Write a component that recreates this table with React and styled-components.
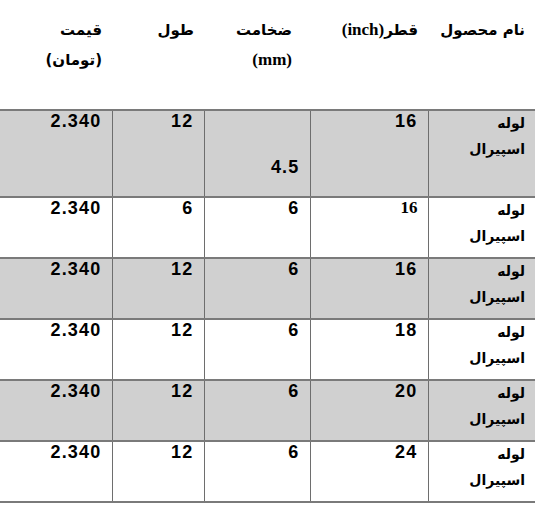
import React from 'react'
import styled, { createGlobalStyle } from 'styled-components'

const GlobalStyle = createGlobalStyle`
  html, body {
    margin: 0;
    padding: 0;
    background: #fff;
  }
`

const Table = styled.table`
  width: 535px;
  border-collapse: collapse;
  table-layout: fixed;
  direction: rtl;
  color: #000;
  font-family: "Liberation Sans", "DejaVu Sans", sans-serif;
  font-weight: 700;
`

const HeadCell = styled.th`
  height: 94px;
  padding: 15px ${props => props.pad || 10}px 0 0;
  vertical-align: top;
  text-align: right;
  font-family: "Liberation Serif", "DejaVu Sans", serif;
  font-size: 17px;
  font-weight: 700;
  line-height: 29px;
  white-space: nowrap;
`

const Fa = styled.span`
  font-family: "DejaVu Sans", sans-serif;
  font-size: 15px;
`

const Row = styled.tr`
  height: ${props => props.tall ? 87 : 61}px;
  background: ${props => props.shaded ? '#d0d0d0' : '#fff'};
  border-top: 2px solid #7a7a7a;
  &:last-child {
    border-bottom: 2px solid #7a7a7a;
  }
`

const Cell = styled.td`
  padding: 1px 10px 0 0;
  vertical-align: ${props => props.bottom ? 'bottom' : 'top'};
  padding-bottom: ${props => props.bottom ? 19 : 0}px;
  text-align: right;
  border-left: 1px solid #6e6e6e;
  line-height: 18px;
  &:last-child {
    border-left: none;
  }
`

const Num = styled.span`
  font-family: ${props => props.serif ? '"Liberation Serif", serif' : '"Liberation Sans", sans-serif'};
  font-size: ${props => props.serif ? 17 : 18}px;
  letter-spacing: ${props => props.serif ? 0 : 1.2}px;
`

const NameBlock = styled.div`
  margin-top: -2px;
`

const Name = styled.span`
  display: block;
  font-family: "DejaVu Sans", sans-serif;
  font-size: 14px;
  font-weight: 700;
  line-height: 26px;
`

const rows = [
  { dia: '16', thick: '4.5', len: '12', price: '2.340', tall: true, shaded: true },
  { dia: '16', thick: '6', len: '6', price: '2.340', serifDia: true },
  { dia: '16', thick: '6', len: '12', price: '2.340', shaded: true },
  { dia: '18', thick: '6', len: '12', price: '2.340' },
  { dia: '20', thick: '6', len: '12', price: '2.340', shaded: true },
  { dia: '24', thick: '6', len: '12', price: '2.340' },
]

export default function App() {
  return (
    <>
      <GlobalStyle />
      <Table>
        <colgroup>
          <col style={{ width: 107 }} />
          <col style={{ width: 118 }} />
          <col style={{ width: 106 }} />
          <col style={{ width: 92 }} />
          <col style={{ width: 112 }} />
        </colgroup>
        <thead>
          <tr>
            <HeadCell><Fa>نام محصول</Fa></HeadCell>
            <HeadCell><Fa>قطر</Fa>(inch)</HeadCell>
            <HeadCell pad={18}><Fa>ضخامت</Fa><br />(mm)</HeadCell>
            <HeadCell><Fa>طول</Fa></HeadCell>
            <HeadCell><Fa>قیمت</Fa><br /><Fa>(تومان)</Fa></HeadCell>
          </tr>
        </thead>
        <tbody>
          {rows.map((r, i) => (
            <Row key={i} tall={r.tall} shaded={r.shaded}>
              <Cell>
                <NameBlock>
                  <Name>لوله</Name>
                  <Name>اسپیرال</Name>
                </NameBlock>
              </Cell>
              <Cell><Num serif={r.serifDia}>{r.dia}</Num></Cell>
              <Cell bottom={r.tall}><Num>{r.thick}</Num></Cell>
              <Cell><Num>{r.len}</Num></Cell>
              <Cell><Num>{r.price}</Num></Cell>
            </Row>
          ))}
        </tbody>
      </Table>
    </>
  )
}
